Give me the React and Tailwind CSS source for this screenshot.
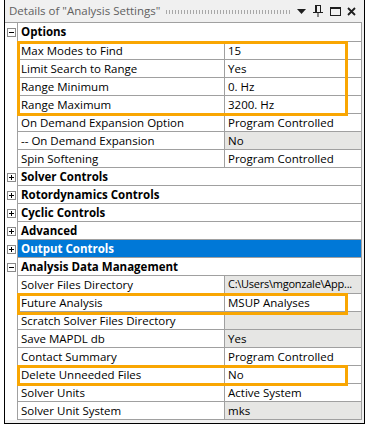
import React from 'react'

const ROWS = [
  { cat: 'Options', open: true, first: true },
  { name: 'Max Modes to Find', value: '15' },
  { name: 'Limit Search to Range', value: 'Yes' },
  { name: 'Range Minimum', value: '0. Hz' },
  { name: 'Range Maximum', value: '3200. Hz' },
  { name: 'On Demand Expansion Option', value: 'Program Controlled' },
  { name: '-- On Demand Expansion', value: 'No', ro: true },
  { name: 'Spin Softening', value: 'Program Controlled' },
  { cat: 'Solver Controls' },
  { cat: 'Rotordynamics Controls' },
  { cat: 'Cyclic Controls' },
  { cat: 'Advanced' },
  { cat: 'Output Controls', selected: true },
  { cat: 'Analysis Data Management', open: true },
  { name: 'Solver Files Directory', value: 'C:\\Users\\mgonzale\\App...', ro: true, tight: true },
  { name: 'Future Analysis', value: 'MSUP Analyses' },
  { name: 'Scratch Solver Files Directory', value: '', ro: true },
  { name: 'Save MAPDL db', value: 'Yes', ro: true },
  { name: 'Contact Summary', value: 'Program Controlled' },
  { name: 'Delete Unneeded Files', value: 'No' },
  { name: 'Solver Units', value: 'Active System' },
  { name: 'Solver Unit System', value: 'mks', ro: true },
]

function ExpandBox({ open }) {
  return (
    <div className="relative w-[9px] h-[9px] border border-[#8a8a8a] bg-white">
      <div className="absolute left-[1px] top-[3px] w-[5px] h-[1px] bg-black" />
      {!open && <div className="absolute left-[3px] top-[1px] w-[1px] h-[5px] bg-black" />}
    </div>
  )
}

function Row({ row }) {
  const h = row.first ? 'h-[19px]' : 'h-[18px]'
  if (row.cat) {
    return (
      <div className={`flex ${h}`}>
        <div className="w-[12px] shrink-0 flex items-center justify-center">
          <ExpandBox open={row.open} />
        </div>
        <div className={`flex-1 min-w-0 flex items-center pl-[3px] border-l border-b border-[#a0a0a0] font-bold ${row.selected ? 'bg-[#0078d7] text-white' : 'text-black'}`}>
          {row.cat}
        </div>
      </div>
    )
  }
  return (
    <div className={`flex ${h}`}>
      <div className="w-[12px] shrink-0" />
      <div className="flex-1 min-w-0 flex border-l border-b border-[#a0a0a0]">
        <div className="w-[207px] shrink-0 flex items-center pl-[3px] border-r border-[#a0a0a0] whitespace-nowrap overflow-hidden">
          {row.name}
        </div>
        <div className={`flex-1 min-w-0 flex items-center pl-[3px] overflow-hidden whitespace-nowrap ${row.ro ? 'bg-[#e6e6e4]' : ''} ${row.tight ? 'text-[11px] tracking-[-0.25px]' : ''}`}>
          {row.value}
        </div>
      </div>
    </div>
  )
}

export default function App() {
  return (
    <div className="w-[370px] h-[429px] bg-white font-['Segoe_UI','Open_Sans',sans-serif] text-[11.5px] text-black">
      <div className="ml-[4px] w-[361px] border-x border-b border-black bg-[#f0f0f0] pb-[3px]">
        {/* title bar */}
        <div className="h-[22px] flex items-center pl-[4px] pr-[8px]">
          <span className="text-[#606060] text-[11.5px] whitespace-nowrap">Details of "Analysis Settings"</span>
          <div className="flex-1 mx-[5px] h-[4px] mt-[1px] bg-[radial-gradient(circle,#a8a8a8_0.7px,transparent_0.9px)] bg-[length:3px_2px]" />
          <svg width="9" height="5" viewBox="0 0 9 5" className="mt-[1px]">
            <path d="M0 0H9L4.5 5Z" fill="#1e1e1e" />
          </svg>
          <svg width="10" height="12" viewBox="0 0 10 12" className="ml-[7px]">
            <path d="M2 0H8V7H7V1H4V7H2Z" fill="#1e1e1e" />
            <path d="M0 7H10V8H0Z" fill="#1e1e1e" />
            <path d="M4.5 8H5.5V12H4.5Z" fill="#1e1e1e" />
          </svg>
          <div className="ml-[7px] w-[11px] h-[9px] border border-t-2 border-[#1e1e1e]" />
          <svg width="9" height="9" viewBox="0 0 9 9" className="ml-[6px]">
            <path d="M1 1L8 8M8 1L1 8" stroke="#1e1e1e" strokeWidth="1.8" />
          </svg>
        </div>

        {/* property grid */}
        <div className="relative mr-[2px] border-t border-r border-[#a0a0a0] bg-white">
          {ROWS.map((r, i) => <Row key={i} row={r} />)}

          {/* highlight frames */}
          <div className="absolute left-[12px] top-[18px] w-[331px] h-[75px] border-[3px] border-[#f9a602]" />
          <div className="absolute left-[12px] top-[270px] w-[331px] h-[22px] border-[3px] border-[#f9a602]" />
          <div className="absolute left-[12px] top-[342px] w-[331px] h-[21px] border-[3px] border-[#f9a602]" />
        </div>
      </div>
    </div>
  )
}
